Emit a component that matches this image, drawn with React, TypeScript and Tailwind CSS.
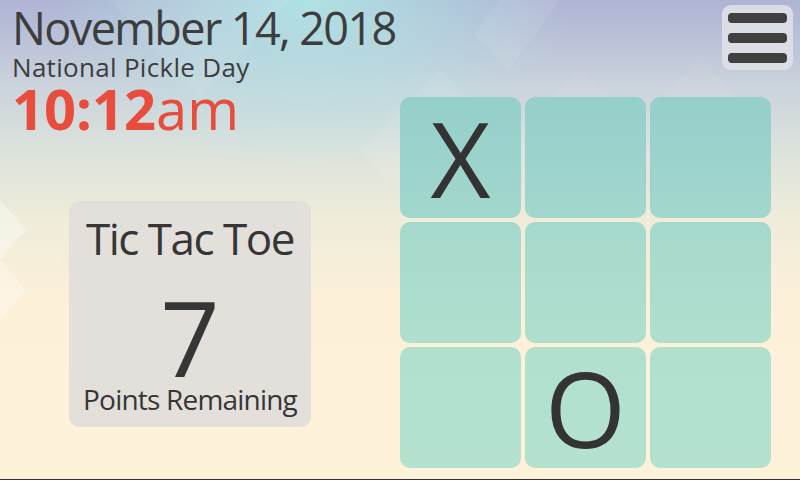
import React from "react";

const cells = ["X", "", "", "", "", "", "", "O", ""];
const rowBg = [
  "bg-[linear-gradient(180deg,#95cfcb,#a2d7cc)]",
  "bg-[linear-gradient(180deg,#a6d9cd,#b0dfce)]",
  "bg-[linear-gradient(180deg,#b2e0cf,#b4e2cf)]",
];

export default function App() {
  return (
    <div
      className="relative w-[800px] h-[480px] overflow-hidden border-b border-[#333] bg-[linear-gradient(180deg,#aeb3d4_0%,#cbd3dc_18%,#dde3dc_32%,#eeecda_45%,#fcf0d9_62%,#fff2da_100%)]"
      style={{ fontFamily: '"Open Sans", "Noto Sans", sans-serif' }}
    >
      <div className="absolute inset-0 bg-[radial-gradient(ellipse_260px_170px_at_310px_0px,rgba(176,228,228,0.95),rgba(176,228,228,0)_100%)]" />
      <svg className="absolute inset-0" width="800" height="480" viewBox="0 0 800 480">
        <polygon points="500,0 474,34 508,71 560,0" fill="#ffffff" opacity="0.08" />
        <polygon points="110,0 200,100 290,0" fill="#ffffff" opacity="0.07" />
        <polygon points="440,70 520,150 440,230 360,150" fill="#ffffff" opacity="0.08" />
        <polygon points="580,70 660,150 580,230 500,150" fill="#ffffff" opacity="0.06" />
        <polygon points="0,200 26,230 0,260" fill="#ffffff" opacity="0.35" />
        <polygon points="0,260 26,290 0,320" fill="#ffffff" opacity="0.3" />
        <polygon points="130,190 200,260 130,330 60,260" fill="#f3e6cf" opacity="0.25" />
        <polygon points="700,60 780,140 700,220 620,140" fill="#ffffff" opacity="0.05" />
      </svg>

      <div className="relative flex h-full">
        <div className="w-[400px] flex flex-col pl-[12px]">
          <div className="text-[45px] leading-none text-[#3d3d3d] mt-[5px] tracking-[-1.6px] whitespace-nowrap">
            November 14, 2018
          </div>
          <div className="text-[26px] leading-none text-[#3d3d3d] mt-[4px] tracking-[0.3px] whitespace-nowrap">
            National Pickle Day
          </div>
          <div className="text-[56px] leading-none text-[#e84c3d] tracking-[0px] whitespace-nowrap">
            <span className="font-bold">10:12</span>
            <span>am</span>
          </div>
          <div className="ml-[57px] mt-[65px] w-[242px] h-[226px] rounded-[10px] bg-[#e3e0db] flex flex-col items-center text-[#363636]">
            <div className="text-[44px] leading-none mt-[15px] tracking-[-1.5px] whitespace-nowrap">Tic Tac Toe</div>
            <div className="text-[104px] leading-none mt-[25px]">7</div>
            <div className="text-[28px] leading-none mt-[-4px] tracking-[-0.8px] whitespace-nowrap">Points Remaining</div>
          </div>
        </div>

        <div className="flex-1 flex flex-col">
          <div className="flex justify-end pr-[7px] pt-[5px]">
            <div className="w-[71px] h-[65px] rounded-[9px] bg-[#dfe0e7]/90 flex flex-col items-center justify-center gap-[10px]">
              <div className="w-[59px] h-[10px] rounded-[4px] bg-[#404040]" />
              <div className="w-[59px] h-[10px] rounded-[4px] bg-[#404040]" />
              <div className="w-[59px] h-[10px] rounded-[4px] bg-[#404040]" />
            </div>
          </div>
          <div className="mt-[27px] grid grid-cols-[repeat(3,121px)] grid-rows-[repeat(3,121px)] gap-[4px]">
            {cells.map((c, i) => (
              <div
                key={i}
                className={`rounded-[10px] flex items-center justify-center text-[104px] leading-none text-[#333] ${rowBg[Math.floor(i / 3)]}`}
              >
                {c}
              </div>
            ))}
          </div>
        </div>
      </div>
    </div>
  );
}
